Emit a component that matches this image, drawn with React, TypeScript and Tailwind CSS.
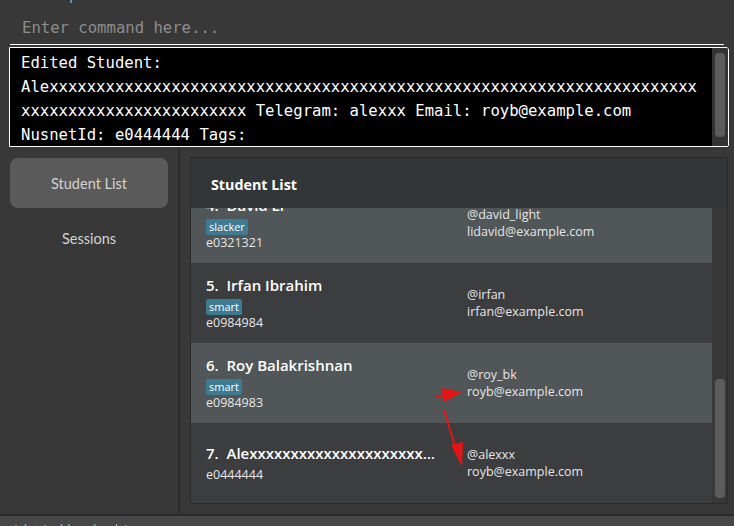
import React from "react";

interface Student {
  index: number;
  name: string;
  tag?: string;
  nusnetId: string;
  telegram: string;
  email: string;
}

const students: Student[] = [
  { index: 4, name: "David Li", tag: "slacker", nusnetId: "e0321321", telegram: "@david_light", email: "lidavid@example.com" },
  { index: 5, name: "Irfan Ibrahim", tag: "smart", nusnetId: "e0984984", telegram: "@irfan", email: "irfan@example.com" },
  { index: 6, name: "Roy Balakrishnan", tag: "smart", nusnetId: "e0984983", telegram: "@roy_bk", email: "royb@example.com" },
  { index: 7, name: "Alex" + "x".repeat(40), nusnetId: "e0444444", telegram: "@alexxx", email: "royb@example.com" },
];

const mono = "font-['DejaVu_Sans_Mono','Liberation_Mono',monospace]";
const sans = "font-['Open_Sans','Noto_Sans',sans-serif]";

function StudentRow({ s }: { s: Student }) {
  return (
    <div
      className={`h-[80px] shrink-0 flex items-center pl-[15px] ${
        s.index % 2 === 0 ? "bg-[#515658]" : "bg-[#3c3d3f]"
      }`}
    >
      <div className="w-[261px] flex flex-col">
        <div className="text-[15px] leading-[20px] font-semibold text-white truncate w-[236px] mb-[4px]">
          {s.index}.&nbsp;&nbsp;{s.name}
        </div>
        {s.tag && (
          <div className="flex">
            <span className="bg-[#3d7b92] text-white text-[11px] leading-[16px] px-[3px] rounded-[2px]">
              {s.tag}
            </span>
          </div>
        )}
        <div className="text-[12.5px] leading-[16px] text-[#e6e6e6]">{s.nusnetId}</div>
      </div>
      <div className="flex flex-col text-[12.5px] leading-[17px] text-[#e6e6e6]">
        <span>{s.telegram}</span>
        <span>{s.email}</span>
      </div>
    </div>
  );
}

export default function App() {
  return (
    <div className={`relative w-[734px] h-[526px] overflow-hidden bg-[#383838] flex flex-col ${sans}`}>
      {/* menu bar, mostly scrolled off */}
      <div className="h-[4px] overflow-hidden relative shrink-0">
        <div className="flex gap-[22px] pl-[10px] text-[12px] leading-[14px] text-[#c8c8c8] -mt-[11px]">
          <span>File</span>
          <span>Help</span>
        </div>
      </div>

      {/* command box */}
      <div className="px-[10px] pt-[6px] shrink-0">
        <div className="h-[35px] border-b border-white flex items-center pl-[12px] pt-[4px]">
          <span className={`${mono} text-[15.6px] text-[#8d8d8d]`}>Enter command here...</span>
        </div>
      </div>

      {/* result display */}
      <div className="px-[9px] pt-[2px] pr-[5px] shrink-0">
        <div className="h-[100px] bg-black border border-white rounded-tr-[3px] rounded-br-[2px] flex overflow-hidden">
          <div className={`flex-1 ${mono} text-[15.6px] leading-[24px] text-white pl-[11px] pt-[3px] whitespace-pre`}>
            <div>Edited Student:</div>
            <div>{"Ale" + "x".repeat(69)}</div>
            <div>{"x".repeat(24) + " Telegram: alexxx Email: royb@example.com"}</div>
            <div>NusnetId: e0444444 Tags:</div>
          </div>
          <div className="w-[16px] bg-[#343434] flex justify-center pt-[5px]">
            <div className="w-[10px] h-[84px] bg-[#5c5c5c] rounded-[4px]" />
          </div>
        </div>
      </div>

      {/* split pane */}
      <div className="flex flex-1 min-h-0 mt-[1px]">
        <div className="w-[178px] flex flex-col px-[10px] pt-[10px] font-['Lato','Open_Sans',sans-serif]">
          <div className="h-[50px] rounded-[8px] bg-[#5a5a5a] flex items-center justify-center pt-[2px] text-[14.5px] text-[#d4d4d4]">
            Student List
          </div>
          <div className="h-[50px] mt-[5px] flex items-center justify-center pt-[1px] text-[14.5px] text-[#d4d4d4]">
            Sessions
          </div>
        </div>
        <div className="w-[2px] bg-[#2c2c2c]" />
        <div className="flex-1 pl-[10px] pr-[6px] pt-[9px] pb-[10px] flex">
          <div className="flex-1 border border-[#2a2a2a] flex flex-col min-h-0">
            <div className="h-[50px] bg-[#323638] flex items-center pl-[20px] pt-[3px] text-[14.3px] font-bold text-white shrink-0">
              Student List
            </div>
            <div className="flex flex-1 min-h-0">
              <div className="flex-1 overflow-hidden flex flex-col">
                <div className="-mt-[25px] flex flex-col">
                  {students.map((s) => (
                    <StudentRow key={s.index} s={s} />
                  ))}
                </div>
              </div>
              <div className="w-[15px] bg-[#383838] flex flex-col justify-end items-center pb-[5px]">
                <div className="w-[10px] h-[119px] bg-[#5c5c5c] rounded-[4px]" />
              </div>
            </div>
          </div>
        </div>
      </div>

      <div className="h-[2px] bg-[#2a2a2a] shrink-0" />
      <div className="h-[10px] bg-[#474747] shrink-0 overflow-hidden">
        <div className="pl-[12px] pt-[7px] text-[12px] leading-[14px] text-[#bdbdbd]">.\data\addressbook.json</div>
      </div>

      {/* annotation arrows */}
      <svg className="absolute left-0 top-0 pointer-events-none" width="734" height="526">
        <line x1="435" y1="397" x2="448" y2="395" stroke="#e41414" strokeWidth="2" />
        <polygon points="462,392 441,388 444,402" fill="#e41414" />
        <line x1="444" y1="410" x2="455" y2="446" stroke="#e41414" strokeWidth="2" />
        <polygon points="462,467 451,445 463,442" fill="#e41414" />
      </svg>
    </div>
  );
}
